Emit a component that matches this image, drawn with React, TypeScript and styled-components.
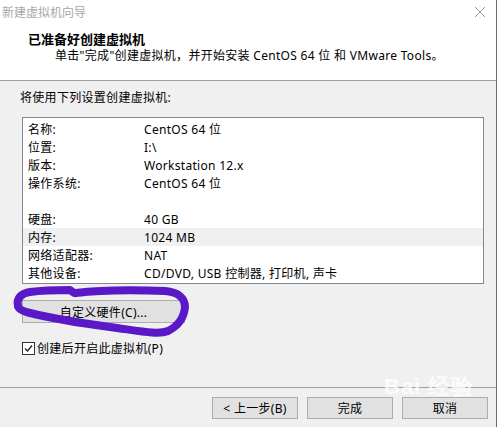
import React from "react";
import styled, { createGlobalStyle } from "styled-components";

const GlobalStyle = createGlobalStyle`
    html, body {
        margin: 0;
        padding: 0;
        background: #ffffff;
    }
    body {
        font-family: "Noto Sans", "Noto Sans CJK SC", sans-serif;
        font-size: 12px;
        letter-spacing: 0.3px;
        color: #000;
    }
`;

const Window = styled.div`
    width: 496px;
    height: 427px;
    border-right: 1px solid #6b6b6b;
    display: flex;
    flex-direction: column;
    overflow: hidden;
    position: relative;
`;

const TitleBar = styled.div`
    height: 24px;
    background: #fff;
    display: flex;
    align-items: center;
    justify-content: space-between;
    padding: 0 10px 0 2px;
    color: #a8a8a8;
    font-size: 12px;
    letter-spacing: 0;
`;

const Header = styled.div`
    height: 57px;
    background: #fff;
    border-bottom: 1px solid #a0a0a0;
    padding: 7px 0 0 28px;
    box-sizing: border-box;
`;

const Heading = styled.div`
    font-weight: bold;
    font-size: 13px;
    line-height: 17px;
    letter-spacing: 0;
`;

const Subtitle = styled.div`
    padding-left: 27px;
    line-height: 16px;
`;

const Body = styled.div`
    flex: 1;
    background: #f0f0f0;
    padding: 9px 12px 0 22px;
    display: flex;
    flex-direction: column;
    position: relative;
`;

const Intro = styled.div`
    margin-left: -2px;
    line-height: 16px;
`;

const ListBox = styled.div`
    margin-top: 11px;
    height: 167px;
    box-sizing: border-box;
    background: #fff;
    border: 1px solid #828790;
    padding-top: 2px;
`;

const Row = styled.div<{ $highlight?: boolean }>`
    height: 18px;
    display: grid;
    grid-template-columns: 116px 1fr;
    align-items: center;
    padding-left: 5px;
    background: ${p => (p.$highlight ? "#f0f0f0" : "transparent")};
`;

const ButtonBase = styled.div`
    background: #e1e1e1;
    border: 1px solid #adadad;
    box-sizing: border-box;
    display: flex;
    align-items: center;
    justify-content: center;
`;

const CustomButton = styled(ButtonBase)`
    margin-top: 16px;
    width: 163px;
    height: 23px;
`;

const CheckRow = styled.label`
    margin-top: 16px;
    display: flex;
    align-items: center;
    gap: 2px;
`;

const CheckBox = styled.span`
    width: 13px;
    height: 13px;
    box-sizing: border-box;
    border: 1px solid #333;
    background: #fff;
    display: flex;
    align-items: center;
    justify-content: center;
`;

const Footer = styled.div`
    height: 40px;
    background: #f0f0f0;
    border-top: 1px solid #a0a0a0;
    display: flex;
    justify-content: flex-end;
    align-items: flex-start;
    gap: 9px;
    padding: 9px 8px 0 0;
    box-sizing: border-box;
`;

const FooterButton = styled(ButtonBase)`
    width: 86px;
    height: 22px;
`;

const Loop = styled.svg`
    position: absolute;
    left: 0;
    top: 0;
    pointer-events: none;
`;

const Watermark = styled.div`
    position: absolute;
    left: 384px;
    top: 372px;
    color: rgba(255, 255, 255, 0.8);
    font-family: "Liberation Sans", sans-serif;
    font-size: 22px;
    font-weight: bold;
    letter-spacing: 1px;
    pointer-events: none;
`;

const rows: [string, string][] = [
    ["名称:", "CentOS 64 位"],
    ["位置:", "I:\\"],
    ["版本:", "Workstation 12.x"],
    ["操作系统:", "CentOS 64 位"],
    ["", ""],
    ["硬盘:", "40 GB"],
    ["内存:", "1024 MB"],
    ["网络适配器:", "NAT"],
    ["其他设备:", "CD/DVD, USB 控制器, 打印机, 声卡"],
];

export default function App() {
    return (
        <Window>
            <GlobalStyle />
            <TitleBar>
                <span>新建虚拟机向导</span>
                <svg width="12" height="12" viewBox="0 0 12 12">
                    <path d="M1 1 L11 11 M11 1 L1 11" stroke="#999" strokeWidth="1" />
                </svg>
            </TitleBar>
            <Header>
                <Heading>已准备好创建虚拟机</Heading>
                <Subtitle>单击"完成"创建虚拟机，并开始安装 CentOS 64 位 和 VMware Tools。</Subtitle>
            </Header>
            <Body>
                <Intro>将使用下列设置创建虚拟机:</Intro>
                <ListBox>
                    {rows.map(([k, v], i) => (
                        <Row key={i} $highlight={k === "内存:"}>
                            <span>{k}</span>
                            <span>{v}</span>
                        </Row>
                    ))}
                </ListBox>
                <CustomButton>自定义硬件(C)...</CustomButton>
                <CheckRow>
                    <CheckBox>
                        <svg width="11" height="11" viewBox="0 0 11 11">
                            <path d="M2 5.5 L4.5 8 L9 2.5" fill="none" stroke="#222" strokeWidth="1.3" />
                        </svg>
                    </CheckBox>
                    <span>创建后开启此虚拟机(P)</span>
                </CheckRow>
            </Body>
            <Footer>
                <FooterButton>&lt; 上一步(B)</FooterButton>
                <FooterButton>完成</FooterButton>
                <FooterButton>取消</FooterButton>
            </Footer>
            <Watermark>Bai 经验</Watermark>
            <Loop width="498" height="427" viewBox="0 0 498 427">
                <path
                    d="M18 306 C16 298 22 293 30 292 C45 290 60 290 70 290 C73 292 74 294 76 293 C100 290 140 290 165 291 C178 292 185 298 185 307 C184 318 178 326 168 331 C158 335 140 331 110 327 C80 323 50 318 30 313 C22 311 18 309 18 306 Z"
                    fill="none"
                    stroke="#5b18c9"
                    strokeWidth="8"
                    strokeLinejoin="round"
                />
            </Loop>
        </Window>
    );
}
